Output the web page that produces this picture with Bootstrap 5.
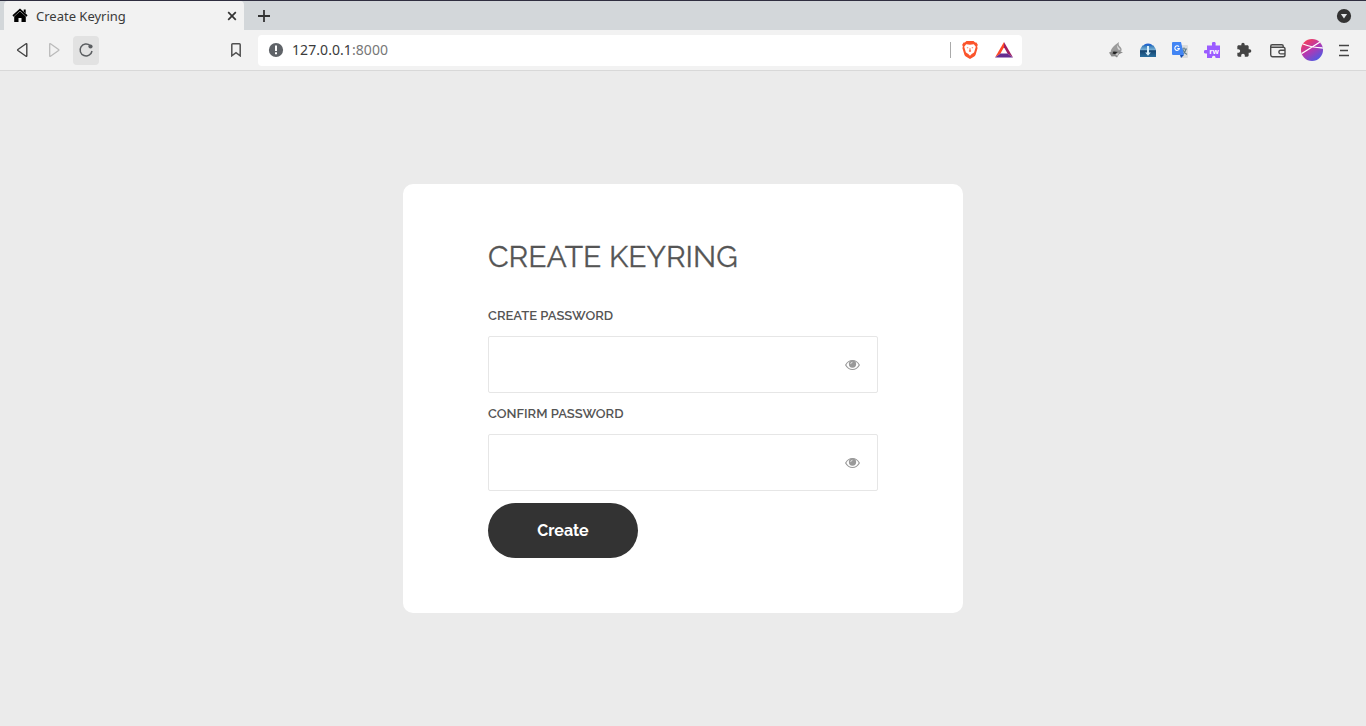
<!DOCTYPE html>
<html lang="en">
<head>
<meta charset="utf-8">
<title>Create Keyring</title>
<link href="https://cdn.jsdelivr.net/npm/bootstrap@5.3.0/dist/css/bootstrap.min.css" rel="stylesheet">
<style>
body{background:#ebebeb;font-family:"Noto Sans",sans-serif;height:100vh;overflow:hidden}
svg{display:block;flex:none}
.tabstrip{height:30px;background:#d3d7da;border-top:1px solid #2f2e40;padding-left:4px;padding-right:14px}
.tab-item{width:240px;height:29px;background:#f2f2f2;border-radius:4px 4px 0 0;padding:0 7px 0 8px;color:#3b3b3b;font-size:13px}
.tab-label{margin-left:8px;line-height:29px;padding-top:2px}
.new-tab{margin-left:14px}
.toolbar{height:41px;background:#f2f2f2;border-bottom:1px solid #d8d8d8;padding-left:9px;padding-right:6px}
.tool{width:26px;height:29px;margin-right:6px;border-radius:4px}
.tool-on{background:#e2e2e2}
.bookmark{margin-left:118px;margin-right:9px}
.address{width:764px;height:31px;border-radius:4px;padding:0 9px 0 10px;font-size:14px;color:#3b3b3b}
.url-text{margin-left:8px;line-height:30px;letter-spacing:.07px}
.port{color:#777}
.bar-rule{width:1px;height:16px;background:#aaa;margin-right:10px}
.rewards{margin-left:16px}
.ext{width:32px;height:28px}
.ext-wide{width:36px}
.page-main{height:655px}
.keyring{width:560px;height:429px;border:0;border-radius:10px;padding:56px 85px 0;font-family:"Raleway","Lato",sans-serif;color:#555}
.keyring h1{font-size:30px;line-height:34px;font-weight:400;-webkit-text-stroke:.3px #555;margin:0 0 33px;color:#555;white-space:nowrap}
.field-label{font-size:13px;line-height:18px;font-weight:600;margin:0 0 11px;color:#555;white-space:nowrap}
.field-box{height:57px;border:1px solid #e6e6e6;border-radius:2px;margin-bottom:12px;padding-right:17px}
.field-box input{box-shadow:none!important;background:transparent}
.create-btn{width:150px;height:55px;background:#333;color:#fff;font-size:16px;font-weight:700;border:0}
.create-btn:hover{background:#333;color:#fff}
</style>
</head>
<body>
<header>
  <div class="tabstrip d-flex align-items-center">
    <div class="tab-item d-flex align-items-center">
      <svg width="16" height="15" viewBox="0 0 16 15"><path d="M8 3.3 2.2 8.6V14h4.3v-4h3v4h4.3V8.6z"/><path d="M1 8 8 1.6 15 8" fill="none" stroke="#000" stroke-width="1.7"/><path d="M11.7 1.5h2v4l-2-2z"/></svg>
      <span class="tab-label">Create Keyring</span>
      <svg class="ms-auto" width="10" height="10" viewBox="0 0 10 10"><path d="m1.2 1.2 7.6 7.6m0-7.6L1.2 8.8" stroke="#333" stroke-width="1.7"/></svg>
    </div>
    <svg class="new-tab" width="12" height="12" viewBox="0 0 12 12"><path d="M6 0v12M0 6h12" stroke="#333" stroke-width="1.8"/></svg>
    <svg class="ms-auto" width="16" height="16" viewBox="0 0 16 16"><circle cx="8" cy="8" r="7.1" fill="#333"/><path d="M4.9 6h6.2L8 10.6z" fill="#e3e5e7"/></svg>
  </div>
  <div class="toolbar d-flex align-items-center">
    <div class="tool d-flex align-items-center justify-content-center"><svg width="14" height="16" viewBox="0 0 14 16"><path d="M11.8 2.2v11.600q0 .9-.8.4L2.900 8.500q-.6-.5 0-1L11 1.800q.8-.5.8.4z" fill="none" stroke="#444" stroke-width="1.400"/></svg></div>
    <div class="tool d-flex align-items-center justify-content-center"><svg width="14" height="16" viewBox="0 0 14 16"><path d="M2.7 2.2v11.600q0 .9.8.4l8.100-5.700q.6-.5 0-1L3.500 1.800q-.8-.5-.8.4z" fill="none" stroke="#bbb" stroke-width="1.300"/></svg></div>
    <div class="tool tool-on d-flex align-items-center justify-content-center"><svg width="16" height="16" viewBox="0 0 16 16"><path d="M12.2 3.600A6 6 0 1 0 14 9" fill="none" stroke="#5b5e61" stroke-width="1.500"/><circle cx="12.500" cy="4.500" r="2.100" fill="#5b5e61"/></svg></div>
    <div class="tool bookmark d-flex align-items-center justify-content-center"><svg width="12" height="14" viewBox="0 0 12 14"><path d="M1.800 1.700q0-.9.900-.9h6.600q.9 0 .9.900v11.100L6 9.700l-4.200 3.100z" fill="none" stroke="#505050" stroke-width="1.500"/></svg></div>
    <div class="address bg-white d-flex align-items-center">
      <svg width="16" height="16" viewBox="0 0 16 16"><circle cx="8" cy="8" r="7.100" fill="#5f6368"/><path d="M7 3.500h2v5.600H7zm0 6.700h2v2H7z" fill="#fff"/></svg>
      <span class="url-text">127.0.0.1<span class="port">:8000</span></span>
      <span class="bar-rule ms-auto"></span>
      <svg width="18" height="20" viewBox="0 0 18 20"><path d="M5.500 1h7l1.700 1.600 1.200-.1 1.400 2.200-.7 2 .5 1.400-2 6.600q-.4 1.200-1.400 1.900L9 19.100l-4.200-2.500q-1-.7-1.400-1.900l-2-6.600.5-1.400-.7-2 1.400-2.200 1.200.1z" fill="#fb542b"/><path d="M5.200 4.300 9 4.800l3.800-.5 2 2.500-1.400 4.600-.4 1.200-2.300 1.300L9 15.800l-1.700-1.900L5 12.600l-.4-1.200L3.200 6.800z" fill="#fff"/><path d="m5.600 7.200 1.800.2-.5 1zm6.800 0-1.800.2.500 1zM8.700 8h.6l.3 2.400.8.600L9 12l-1.400-1 .8-.6z" fill="#fb542b"/></svg>
      <svg class="rewards" width="18" height="16" viewBox="0 0 18 16"><path d="M9 0v5.300l-3.500 6.200L0 15.500z" fill="#ff4724"/><path d="M9 0v5.300l3.500 6.200 5.500 4z" fill="#9e1f63"/><path d="M0 15.500 5.500 11.500h7l5.500 4z" fill="#662d91"/></svg>
    </div>
    <div class="d-flex align-items-center ms-auto">
      <div class="ext d-flex align-items-center justify-content-center"><svg width="16" height="16" viewBox="0 0 16 16"><path d="M11 0Q9.800 3 12.500 5q2 2 .8 4.500L8 11.500l-5.500-2Q3 5.500 11 0z" fill="#9b9b9b"/><path d="M9.500 3Q8.500 6 11 8l1.500-.5Q10 5.500 9.500 3z" fill="#ddd"/><path d="m1 10.500 6-2 8 1.700-4 2-2 3.300-2-1.300-3.500.3z" fill="#8a8a8a"/><path d="m5.500 9.500 4 .5-2.500 2.200-2.500-.7z" fill="#222"/><path d="m7.500 12.200 3.500-1.700L9.300 14z" fill="#ccc"/></svg></div>
      <div class="ext d-flex align-items-center justify-content-center"><svg width="16" height="16" viewBox="0 0 16 16"><defs><linearGradient id="bx" x2="0" y2="1"><stop stop-color="#2f77b8"/><stop offset=".38" stop-color="#79b0d4"/><stop offset=".45" stop-color="#16446f"/><stop offset="1" stop-color="#2a6f9f"/></linearGradient></defs><path d="M3 4.500Q4 1.500 8 1.500T13 4.500" fill="#2264d1"/><path d="M2.500 3.500h11L16 7.500V15H0V7.500z" fill="url(#bx)"/><path d="M7 4h2v6.500h1.800L8 13.800l-2.800-3.300H7z" fill="#d8effb"/></svg></div>
      <div class="ext d-flex align-items-center justify-content-center"><svg width="16" height="16" viewBox="0 0 16 16"><path d="M7 3h8q1 0 1 1v11q0 1-1 1H9z" fill="#dcdcdc"/><path d="M9.500 7H15M12 5.500V7m2 0q-1 4-3.500 5m.5-4q1 3 4 4.500" stroke="#607d8b" fill="none" stroke-width="1.100"/><path d="M1 0h8l3 13H1q-1 0-1-1V1q0-1 1-1z" fill="#4285f4"/><path d="M8 13h4l-3 3z" fill="#174fb4"/><path d="M7 4.700A2.300 2.300 0 1 0 7.400 6.500H5.300" fill="none" stroke="#fff" stroke-width="1.100"/></svg></div>
      <div class="ext d-flex align-items-center justify-content-center"><svg width="16" height="16" viewBox="0 0 16 16"><path d="M3 3.500h5V2.200a1.900 1.900 0 1 1 3.600 0v1.300H16V16h-4.500v-.8a1.800 1.800 0 0 0-3.500 0v.8H3v-4.500H1.500a1.700 1.700 0 1 1 0-3.400H3z" fill="#9b5cff"/><text x="5.200" y="12" font-family="Noto Sans,sans-serif" font-weight="700" font-size="7.500" fill="#fff">rw</text></svg></div>
      <div class="ext d-flex align-items-center justify-content-center"><svg width="16" height="16" viewBox="0 0 24 24"><path d="M20.500 11H19V7c0-1.100-.9-2-2-2h-4V3.500a2.500 2.500 0 0 0-5 0V5H4c-1.100 0-2 .9-2 2v3.800h1.500c1.500 0 2.700 1.200 2.700 2.700s-1.200 2.700-2.700 2.700H2V20c0 1.100.9 2 2 2h3.800v-1.500c0-1.500 1.200-2.700 2.700-2.700s2.700 1.200 2.700 2.700V22H17c1.100 0 2-.9 2-2v-4h1.500a2.500 2.500 0 0 0 0-5z" fill="#444"/></svg></div>
      <div class="ext ext-wide d-flex align-items-center justify-content-center"><svg width="18" height="18" viewBox="0 0 18 18"><path d="M14.200 6.300V5q0-1.300-1.300-1.300H3.200q-1.500 0-1.500 1.500v8.600q0 2 2 2h10.500q1.800 0 1.800-1.800V8.100q0-1.800-1.800-1.800H3.200Q1.700 6.300 1.700 5M16 9.300h-4.300a1.800 1.800 0 0 0 0 3.600H16" fill="none" stroke="#4a4a4a" stroke-width="1.400"/></svg></div>
      <div class="ext d-flex align-items-center justify-content-center"><svg width="22" height="22" viewBox="0 0 22 22"><defs><linearGradient id="av" x1=".1" x2=".8" y2="1"><stop offset=".1" stop-color="#f23d5c"/><stop offset=".5" stop-color="#b637b0"/><stop offset="1" stop-color="#435de8"/></linearGradient><clipPath id="ac"><circle cx="11" cy="11" r="11"/></clipPath></defs><g clip-path="url(#ac)"><path d="M0 0h22v22H0z" fill="url(#av)"/><path d="m0 15 19-12M2 5q8 3.500 20 4" fill="none" stroke="#fff" stroke-width="1.300"/></g></svg></div>
      <div class="ext d-flex align-items-center justify-content-center"><svg width="10" height="13" viewBox="0 0 10 13"><path d="M0 1.500h10M1 6.500h8M0 11.500h10" stroke="#444" stroke-width="1.500"/></svg></div>
    </div>
  </div>
</header>
<main class="page-main d-flex align-items-center justify-content-center">
  <form class="card keyring">
    <h1>CREATE KEYRING</h1>
    <label class="field-label" for="pw">CREATE PASSWORD</label>
    <div class="field-box d-flex align-items-center">
      <input id="pw" type="password" class="form-control border-0 h-100">
      <svg width="15" height="12" viewBox="0 0 16 12"><path d="M.7 6Q3.300 1.200 8 1.200T15.300 6Q12.700 10.800 8 10.800T.7 6z" fill="none" stroke="#999" stroke-width="1.200"/><circle cx="8" cy="5" r="3.900" fill="#999"/><path d="M6 5Q6.100 3.200 8 3" fill="none" stroke="#fff" stroke-width=".7"/></svg>
    </div>
    <label class="field-label" for="pw2">CONFIRM PASSWORD</label>
    <div class="field-box d-flex align-items-center">
      <input id="pw2" type="password" class="form-control border-0 h-100">
      <svg width="15" height="12" viewBox="0 0 16 12"><path d="M.7 6Q3.300 1.200 8 1.200T15.300 6Q12.700 10.800 8 10.800T.7 6z" fill="none" stroke="#999" stroke-width="1.200"/><circle cx="8" cy="5" r="3.900" fill="#999"/><path d="M6 5Q6.100 3.200 8 3" fill="none" stroke="#fff" stroke-width=".7"/></svg>
    </div>
    <button type="button" class="btn rounded-pill create-btn">Create</button>
  </form>
</main>
<script src="https://cdn.jsdelivr.net/npm/bootstrap@5.3.0/dist/js/bootstrap.bundle.min.js"></script>
</body>
</html>
